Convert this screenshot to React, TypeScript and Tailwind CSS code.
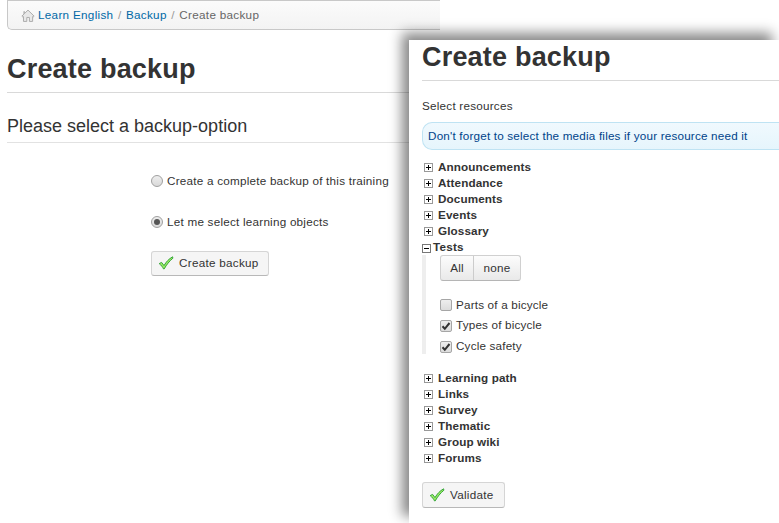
import { ReactNode } from "react";

function HomeIcon() {
  return (
    <svg width="14" height="13" viewBox="0 0 13 12" className="block">
      <path d="M0.8 6.6 6.5 1l5.700 5.600-.8.700L10.800 7v4.500H7.800V7.800H5.400v3.700H2.300V7l-.7.300z" fill="#e8e8e8" stroke="#aaa" strokeWidth="0.900" strokeLinejoin="round" />
      <path d="M2.200 2h1.500v1.700L2.200 5z" fill="#b5b5b5" />
    </svg>
  );
}

function GreenCheck() {
  return (
    <svg width="16" height="16" viewBox="0 0 16 16" className="block shrink-0">
      <path d="M1.200 8.600 3.600 7.400 6 10.600C8.200 6.800 10.800 4 14.600 1.800L14.900 3.200C11.300 6.200 8.600 9.600 6.200 13.900H5.500C4.500 11.800 3.200 10.200 1.200 8.600Z" fill="#9bec62" stroke="#36a53c" strokeWidth="1" strokeLinejoin="round" />
    </svg>
  );
}

function Expander({ open = false }: { open?: boolean }) {
  return open ? (
    <svg width="9" height="9" viewBox="0 0 9 9" className="mt-[5px] block" shapeRendering="crispEdges">
      <rect x="0.5" y="0.5" width="8" height="8" fill="#fff" stroke="#777" />
      <path d="M2 4.500h5" stroke="#000" />
    </svg>
  ) : (
    <svg width="9" height="9" viewBox="0 0 9 9" className="mt-[4px] block" shapeRendering="crispEdges">
      <rect x="0.5" y="0.5" width="8" height="8" fill="#fff" stroke="#999" />
      <path d="M2 4.500h5M4.500 2v5" stroke="#000" />
    </svg>
  );
}

function Node({ children }: { children: ReactNode }) {
  return (
    <li className="flex h-4 pl-[2px] font-bold tracking-[0.12px]">
      <Expander />
      <span className="ml-[5px]">{children}</span>
    </li>
  );
}

function Radio({ checked = false, children }: { checked?: boolean; children: ReactNode }) {
  return (
    <label className="flex h-4 items-center">
      <span className="flex size-3 items-center justify-center rounded-full border border-[#a0a0a0] bg-linear-to-b from-[#eee] to-[#d9d9d9]">
        {checked && <span className="size-1.5 rounded-full bg-[#555]" />}
      </span>
      <span className="ml-1">{children}</span>
    </label>
  );
}

function Checkbox({ checked = false, children }: { checked?: boolean; children: ReactNode }) {
  return (
    <label className="flex h-4 items-center tracking-[0.18px]">
      <span className={`flex size-3 items-center justify-center rounded-xs border border-[#a6a6a6] bg-linear-to-b from-[#eee] to-[#dcdcdc] ${checked ? "mt-0.5" : ""}`}>
        {checked && (
          <svg width="10" height="10" viewBox="0 0 10 10">
            <path d="M1.500 5.300 3.800 7.800 8.500 2" fill="none" stroke="#333" strokeWidth="2" />
          </svg>
        )}
      </span>
      <span className="ml-1">{children}</span>
    </label>
  );
}

function ActionButton({ children, className }: { children: ReactNode; className: string }) {
  return (
    <button className={`flex items-center rounded-[3px] border border-[#d5d5d5] border-b-[#b8b8b8] bg-[#f5f5f5] pl-1.5 tracking-[0.28px] ${className}`}>
      <GreenCheck />
      <span className="ml-[5px] whitespace-nowrap">{children}</span>
    </button>
  );
}

export default function App() {
  return (
    <div className="relative h-[523px] w-[779px] overflow-hidden bg-white font-['Liberation_Sans',Arial,sans-serif] text-[11.7px] leading-4 tracking-[0.23px] text-[#333] whitespace-nowrap">
      <main className="pl-[7px]">
        <nav className="flex h-[30px] w-[433px] items-center rounded-bl-[5px] border border-r-0 border-[#c8c8c8] bg-linear-to-b from-[#fbfbfb] to-[#f3f3f3] pl-[13px] tracking-[0.3px]">
          <HomeIcon />
          <span className="ml-[3px] text-[#0069a6]">Learn English</span>
          <span className="mx-[4.500px] text-[#999]">/</span>
          <span className="text-[#0069a6]">Backup</span>
          <span className="mx-[4.500px] text-[#999]">/</span>
          <span className="text-[#666]">Create backup</span>
        </nav>
        <h1 className="mt-[21px] h-[42px] border-b border-[#d9d9d9] text-[27px] leading-9 font-bold tracking-[0.2px]">Create backup</h1>
        <h2 className="mt-[14px] h-9 border-b border-[#e2e2e2] text-[18px] leading-[38px] tracking-normal">Please select a backup-option</h2>
        <form className="pl-[144px]">
          <div className="mt-[30px]"><Radio>Create a complete backup of this training</Radio></div>
          <div className="mt-[25px] mb-[21px]"><Radio checked>Let me select learning objects</Radio></div>
          <ActionButton className="h-[25px] w-[118px] pb-px">Create backup</ActionButton>
        </form>
      </main>

      <section className="absolute top-10 left-[409px] h-[483px] w-[370px] bg-white pl-[13px] shadow-[-7px_-7px_12px_rgba(0,0,0,0.47)]">
        <h1 className="h-[41px] border-b border-[#d9d9d9] text-[27px] leading-[34px] font-bold tracking-[0.2px]">Create backup</h1>
        <p className="mt-[17px]">Select resources</p>
        <div className="mt-2 flex h-[28px] items-center rounded-l-[10px] border border-r-0 border-[#bfe3f3] bg-linear-to-b from-[#f0f9fe] to-[#e6f5fc] pl-[5px] tracking-[0.19px] text-[#00438a]">
          Don't forget to select the media files if your resource need it
        </div>
        <ul className="mt-[9px]">
          <Node>Announcements</Node>
          <Node>Attendance</Node>
          <Node>Documents</Node>
          <Node>Events</Node>
          <Node>Glossary</Node>
          <li>
            <div className="flex h-4 font-bold">
              <Expander open />
              <span className="ml-[2px]">Tests</span>
            </div>
            <div className="h-[99px] border-l-4 border-[#eee] pl-[14px]">
              <div className="flex h-[26px] w-[81px] rounded-[3px] border border-[#d0d0d0] border-b-[#b5b5b5] bg-linear-to-b from-[#fcfcfc] to-[#e9e9e9]">
                <button className="w-[33px] border-r border-[#ccc] tracking-[0.23px]">All</button>
                <button className="flex-1 tracking-[0.23px]">none</button>
              </div>
              <div className="mt-4"><Checkbox>Parts of a bicycle</Checkbox></div>
              <div className="mt-1"><Checkbox checked>Types of bicycle</Checkbox></div>
              <div className="mt-[5px]"><Checkbox checked>Cycle safety</Checkbox></div>
            </div>
          </li>
        </ul>
        <ul className="mt-4 mb-4">
          <Node>Learning path</Node>
          <Node>Links</Node>
          <Node>Survey</Node>
          <Node>Thematic</Node>
          <Node>Group wiki</Node>
          <Node>Forums</Node>
        </ul>
        <ActionButton className="h-[26px] w-[83px]">Validate</ActionButton>
      </section>
    </div>
  );
}
